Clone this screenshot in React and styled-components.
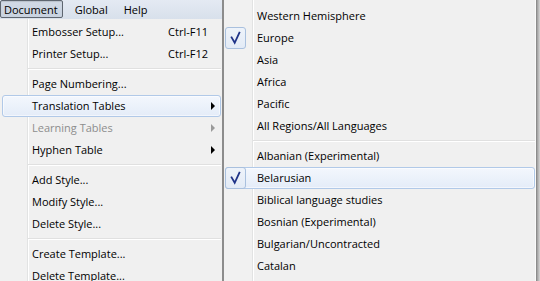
import React from "react";
import styled, { createGlobalStyle, css } from "styled-components";

const GlobalStyle = createGlobalStyle`
  html, body { margin: 0; padding: 0; background: #f0f0f0; }
  body {
    font-family: "Open Sans", "Noto Sans", sans-serif;
    font-size: 11px;
    color: #000;
  }
`;

const Screen = styled.div`
  display: flex;
  width: 540px;
  height: 281px;
  overflow: hidden;
  background: #f0f0f0;
`;

const LeftColumn = styled.div`
  flex: none;
  width: 223px;
  box-sizing: border-box;
  border-right: 1px solid #8c8c8c;
  display: flex;
  flex-direction: column;
`;

const MenuBar = styled.div`
  flex: none;
  height: 19px;
  box-sizing: border-box;
  display: flex;
  align-items: stretch;
  gap: 8px;
  padding-bottom: 1px;
  background: linear-gradient(#e4eaf3, #d8e0eb);
`;

const BarItem = styled.div`
  display: flex;
  align-items: center;
  padding: 0 3px;
  border: 1px solid transparent;
  border-radius: 2px;
  ${(p) =>
    p.$active &&
    css`
      padding: 0 4px 0 3px;
      border-color: #5e6670;
      background: linear-gradient(#d2dae6, #c8d2e0);
      box-shadow: inset 0 1px 1px rgba(0, 0, 0, 0.12);
    `}
`;

const DropMenu = styled.div`
  flex: 1;
  padding: 2px 1px 0 2px;
  background: linear-gradient(
    to right,
    #f1f1f1 0 27px,
    #e2e3e3 27px 28px,
    #ffffff 28px 29px,
    #f0f0f0 29px
  );
`;

const SubMenu = styled.div`
  flex: none;
  width: 314px;
  box-sizing: border-box;
  border-left: 1px solid #8c8c8c;
  border-right: 1px solid #8c8c8c;
  box-shadow: inset -1px 0 0 #fafafa;
  padding: 5px 1px 0 1px;
  background: linear-gradient(
    to right,
    #f1f1f1 0 28px,
    #e2e3e3 28px 29px,
    #ffffff 29px 30px,
    #f0f0f0 30px
  );
`;

const Shadow = styled.div`
  flex: none;
  width: 3px;
  background: linear-gradient(to right, #9d9d9d, #b9b9b9 50%, #d6d6d6);
`;

const Item = styled.div`
  height: 22px;
  box-sizing: border-box;
  display: flex;
  align-items: center;
  border: 1px solid transparent;
  border-radius: 3px;
  white-space: nowrap;
  color: ${(p) => (p.$disabled ? "#8d8d8d" : "#000")};
  ${(p) =>
    p.$hot &&
    css`
      border-color: #b1c9e8;
      background: linear-gradient(#f3f7fd, #e4ecf8);
      box-shadow: inset 0 0 0 1px rgba(255, 255, 255, 0.55);
    `}
`;

const Slot = styled.div`
  flex: none;
  width: ${(p) => p.$w}px;
  height: 20px;
  display: flex;
  align-items: center;
`;

const CheckBox = styled.div`
  width: 21px;
  height: 22px;
  margin: -1px 0 -1px -1px;
  box-sizing: border-box;
  border: 1px solid #a9c0de;
  border-radius: 3px;
  background: linear-gradient(#eef3fa, #e3ebf6);
  display: flex;
  align-items: center;
  justify-content: center;
`;

const Label = styled.span`
  flex: 1;
  line-height: 20px;
`;

const Shortcut = styled.span`
  flex: none;
  margin-right: 12px;
  line-height: 20px;
`;

const Arrow = styled.span`
  flex: none;
  width: 0;
  height: 0;
  margin-right: 5px;
  border-left: 4px solid ${(p) => (p.$disabled ? "#9a9a9a" : "#000")};
  border-top: 4px solid transparent;
  border-bottom: 4px solid transparent;
`;

const Separator = styled.div`
  height: 8px;
  display: flex;
  align-items: center;
  margin-left: ${(p) => p.$indent}px;
  &::before {
    content: "";
    flex: 1;
    height: 1px;
    border-bottom: 1px solid #ffffff;
    background: #e0e0e0;
  }
`;

const CheckMark = () => (
  <svg width="19" height="20" viewBox="0 0 19 20">
    <path
      d="M5.6 9.4 L8.7 14.8 L13.4 4.6"
      fill="none"
      stroke="#1f3388"
      strokeWidth="1.8"
      strokeLinejoin="miter"
      strokeLinecap="square"
    />
  </svg>
);

const mainItems = [
  { label: "Embosser Setup...", shortcut: "Ctrl-F11" },
  { label: "Printer Setup...", shortcut: "Ctrl-F12" },
  { sep: true },
  { label: "Page Numbering..." },
  { label: "Translation Tables", sub: true, hot: true },
  { label: "Learning Tables", sub: true, disabled: true },
  { label: "Hyphen Table", sub: true },
  { sep: true },
  { label: "Add Style..." },
  { label: "Modify Style..." },
  { label: "Delete Style..." },
  { sep: true },
  { label: "Create Template..." },
  { label: "Delete Template..." },
];

const subItems = [
  { label: "Western Hemisphere" },
  { label: "Europe", checked: true },
  { label: "Asia" },
  { label: "Africa" },
  { label: "Pacific" },
  { label: "All Regions/All Languages" },
  { sep: true },
  { label: "Albanian (Experimental)" },
  { label: "Belarusian", checked: true, hot: true },
  { label: "Biblical language studies" },
  { label: "Bosnian (Experimental)" },
  { label: "Bulgarian/Uncontracted" },
  { label: "Catalan" },
];

export default function App() {
  return (
    <>
      <GlobalStyle />
      <Screen>
        <LeftColumn>
          <MenuBar>
            <BarItem $active>Document</BarItem>
            <BarItem>Global</BarItem>
            <BarItem>Help</BarItem>
          </MenuBar>
          <DropMenu>
            {mainItems.map((it, i) =>
              it.sep ? (
                <Separator key={i} $indent={26} />
              ) : (
                <Item key={i} $hot={it.hot} $disabled={it.disabled}>
                  <Slot $w={29} />
                  <Label>{it.label}</Label>
                  {it.shortcut && <Shortcut>{it.shortcut}</Shortcut>}
                  {it.sub && <Arrow $disabled={it.disabled} />}
                </Item>
              )
            )}
          </DropMenu>
        </LeftColumn>
        <SubMenu>
          {subItems.map((it, i) =>
            it.sep ? (
              <Separator key={i} $indent={28} />
            ) : (
              <Item key={i} $hot={it.hot}>
                <Slot $w={31}>
                  {it.checked && (
                    <CheckBox>
                      <CheckMark />
                    </CheckBox>
                  )}
                </Slot>
                <Label>{it.label}</Label>
              </Item>
            )
          )}
        </SubMenu>
        <Shadow />
      </Screen>
    </>
  );
}
